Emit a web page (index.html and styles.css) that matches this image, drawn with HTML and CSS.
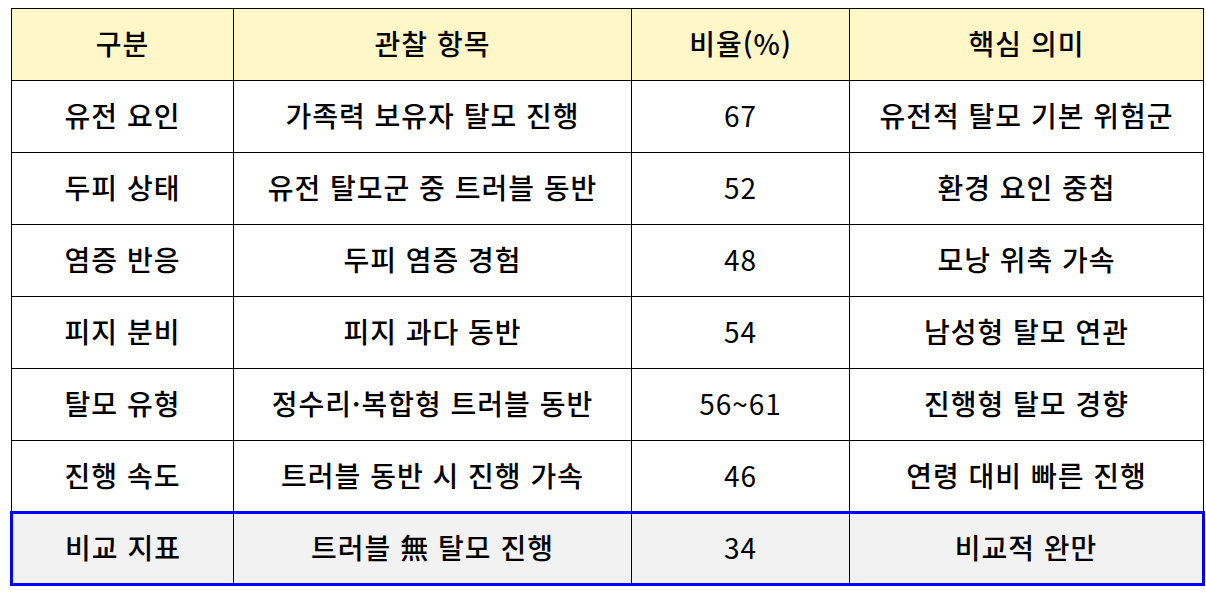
FILE: index.html
```html
<!DOCTYPE html>
<html lang="ko">
<head>
<meta charset="utf-8">
<link rel="stylesheet" href="styles.css">
</head>
<body>
<table class="grid">
  <colgroup>
    <col class="c1"><col class="c2"><col class="c3"><col class="c4">
  </colgroup>
  <thead>
    <tr class="head"><th>구분</th><th>관찰 항목</th><th>비율(%)</th><th>핵심 의미</th></tr>
  </thead>
  <tbody>
    <tr><td>유전 요인</td><td>가족력 보유자 탈모 진행</td><td>67</td><td>유전적 탈모 기본 위험군</td></tr>
    <tr><td>두피 상태</td><td>유전 탈모군 중 트러블 동반</td><td>52</td><td>환경 요인 중첩</td></tr>
    <tr><td>염증 반응</td><td>두피 염증 경험</td><td>48</td><td>모낭 위축 가속</td></tr>
    <tr><td>피지 분비</td><td>피지 과다 동반</td><td>54</td><td>남성형 탈모 연관</td></tr>
    <tr><td>탈모 유형</td><td>정수리·복합형 트러블 동반</td><td>56~61</td><td>진행형 탈모 경향</td></tr>
    <tr><td>진행 속도</td><td>트러블 동반 시 진행 가속</td><td>46</td><td>연령 대비 빠른 진행</td></tr>
    <tr class="highlight"><td>비교 지표</td><td>트러블 無 탈모 진행</td><td>34</td><td>비교적 완만</td></tr>
  </tbody>
</table>
</body>
</html>
```

FILE: styles.css
```css
html, body {
  margin: 0;
  padding: 0;
  background: #ffffff;
}
body {
  padding: 8px 0 0 10px;
  font-family: "Noto Sans CJK KR", "Noto Sans", sans-serif;
  color: #000;
}
.grid {
  border-collapse: collapse;
  width: 1192px;
  table-layout: fixed;
}
.c1 { width: 222px; }
.c2 { width: 398px; }
.c3 { width: 218px; }
.c4 { width: 354px; }
.grid th, .grid td {
  border: 1px solid #000;
  height: 72px;
  padding: 0 0 3px 0;
  box-sizing: border-box;
  text-align: center;
  vertical-align: middle;
  font-size: 28px;
  font-weight: 500;
  letter-spacing: 1px;
  line-height: 1;
}
.grid td:nth-child(3) {
  font-weight: 400;
}
.head th {
  background: #fff7c8;
}
.highlight td {
  background: #f2f2f2;
  border-top: 3px solid #0000ff;
  border-bottom: 3px solid #0000ff;
}
.highlight td:first-child { border-left: 3px solid #0000ff; }
.highlight td:last-child { border-right: 3px solid #0000ff; }
```
